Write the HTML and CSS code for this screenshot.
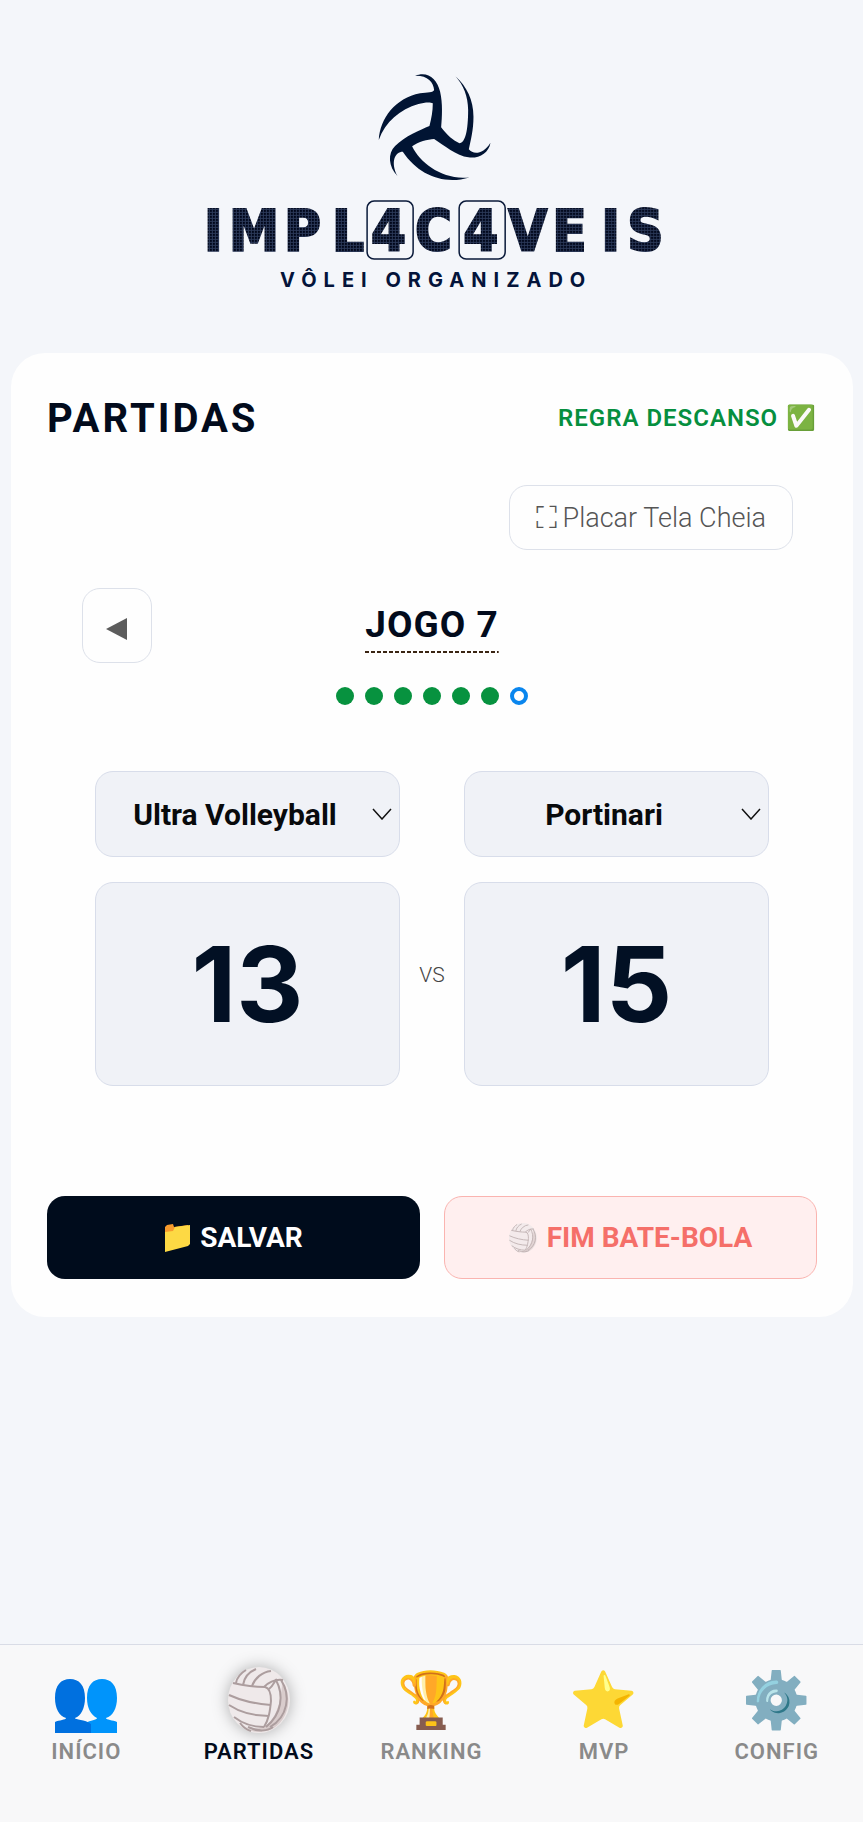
FILE: index.html
```
<!DOCTYPE html>
<html lang="pt-BR">
<head>
  <meta charset="UTF-8">
  <meta name="viewport" content="width=device-width, initial-scale=1.0">
  <title>Implacáveis - Partidas</title>
  <link rel="stylesheet" href="styles.css">
</head>
<body>
  <!-- shared icons -->
  <svg class="sprite" aria-hidden="true">
    <symbol id="ball" viewBox="0 0 62 66">
      <ellipse class="ball-skin" cx="31" cy="33" rx="31" ry="33"/>
      <path class="ball-shade" d="M42 55 C50 45 54 30 54 14 C60 22 62 34 59 43 C55 56 45 65 31 65 C27 65 24 64 21 63 C30 62 38 60 42 55Z"/>
      <g class="ball-seam">
        <path d="M5 16 C18 19 28 20 37 20 C42 21 43 27 43 34 C42 44 41 52 36 60"/>
        <path d="M1 28 C14 34 28 37 43 38"/>
        <path d="M1 38 C13 46 27 49 41 49"/>
        <path d="M6 50 C15 57 25 60 36 60"/>
        <path d="M8 16 C9 10 13 6 18 3"/>
        <path d="M15 18 C16 11 21 5 28 2"/>
        <path d="M24 19 C27 11 34 5 43 4"/>
        <path d="M36 20 C41 15 48 12 55 13"/>
        <path d="M41 22 C45 19 46 15 48 13 C56 28 54 47 38 60"/>
        <path d="M53 13 C63 28 60 50 42 60"/>
        <path d="M12 56 C15 60 19 63 23 64"/>
        <path d="M20 60 C30 65 40 64 45 60"/>
      </g>
    </symbol>
    <symbol id="people" viewBox="0 0 62 54">
      <path fill="#0094fb" d="M47 0 C56 0 62 6 62 19 C62 29 58 37 51 39 C51 41 58 41 62 43 V54 H31 V44 C35 41 42 41 42 39 C36 36 32 29 32 19 C32 6 38 0 47 0Z"/>
      <path fill="#0070df" d="M15 0 C24 0 30 6 30 19 C30 29 26 37 20 39 C20 41 30 40 36 45 V54 H0 V43 C4 41 11 41 11 39 C4 37 0 29 0 19 C0 6 6 0 15 0Z"/>
    </symbol>
  </svg>

  <header class="header">
    <svg class="logo" viewBox="190 60 483 240" role="img" aria-label="Implacáveis Vôlei Organizado">
      <defs>
        <pattern id="dots" x="0" y="0" width="3" height="3" patternUnits="userSpaceOnUse">
          <rect width="3" height="3" fill="#2c3a5a"/>
          <rect width="2" height="2" fill="#00061a"/>
        </pattern>
      </defs>
      <path class="logo-mark" transform="translate(340 50) scale(.3333)" d="M225 77 C262 62 290 85 300 125 C308 160 306 200 303 232 C320 255 340 272 358 280 C376 278 384 240 384 180 C384 140 370 105 346 79 C380 110 400 150 400 200 C400 240 392 270 386 298 C400 315 430 312 451 278 C446 310 415 326 385 322 C350 318 310 285 282 267 C262 268 235 275 216 289 C240 340 310 392 388 382 C310 405 235 375 188 305 C165 305 150 335 172 378 C145 350 142 310 165 288 C195 258 240 240 268 228 C274 205 278 185 278 160 C270 155 250 158 235 162 C180 178 135 215 116 270 C120 205 165 145 240 130 C262 126 280 128 282 120 C280 95 262 76 225 77Z"/>
      <text class="logo-name" y="251" x="204 229 284 332 371 415 463 508 552 601 627">IMPL4C4VEIS</text>
      <rect class="logo-box" x="367" y="201" width="46" height="58" rx="7"/>
      <rect class="logo-box" x="459" y="201" width="46" height="58" rx="7"/>
      <text class="logo-sub" x="280" y="287">VÔLEI ORGANIZADO</text>
    </svg>
  </header>

  <main class="card">
    <div class="card-header">
      <h1>PARTIDAS</h1>
      <span class="regra">REGRA DESCANSO <span class="check">✅</span></span>
    </div>

    <button type="button" class="btn-outline btn-fullscreen"><span class="fs-icon">⛶</span>Placar Tela Cheia</button>

    <div class="jogo-row">
      <button type="button" class="btn-outline btn-prev" aria-label="Jogo anterior">
        <svg width="22" height="22" viewBox="0 0 22 22"><path fill="#5c5c5c" d="M0 11 L21 0 V22Z"/></svg>
      </button>
      <h2>JOGO 7</h2>
    </div>

    <div class="dots">
      <span class="dot"></span>
      <span class="dot"></span>
      <span class="dot"></span>
      <span class="dot"></span>
      <span class="dot"></span>
      <span class="dot"></span>
      <span class="dot atual"></span>
    </div>

    <div class="placar">
      <div class="time">
        <div class="select-wrap">
          <select aria-label="Time A">
            <option>Ultra Volleyball</option>
            <option>Portinari</option>
          </select>
          <svg class="seta" width="20" height="12" viewBox="0 0 20 12"><path d="M1 1 L10 11 L19 1"/></svg>
        </div>
        <input type="text" inputmode="numeric" value="13" aria-label="Pontos do time A">
      </div>
      <span class="vs">VS</span>
      <div class="time">
        <div class="select-wrap">
          <select aria-label="Time B">
            <option>Portinari</option>
            <option>Ultra Volleyball</option>
          </select>
          <svg class="seta" width="20" height="12" viewBox="0 0 20 12"><path d="M1 1 L10 11 L19 1"/></svg>
        </div>
        <input type="text" inputmode="numeric" value="15" aria-label="Pontos do time B">
      </div>
    </div>

    <div class="acoes">
      <button type="button" class="btn-salvar">
        <svg width="26" height="28" viewBox="0 0 26 28">
          <path fill="#f79a2c" d="M1 9 V3 L3 1 L9 0 L10 3 L24 1 V8Z"/>
          <path fill="#fdd944" d="M1 8 L9 7 L11 3 L26 1 V20 L24 22 L1 28Z"/>
        </svg>
        SALVAR
      </button>
      <button type="button" class="btn-fim">
        <svg class="ball-faded" width="28" height="30"><use href="#ball"/></svg>
        FIM BATE-BOLA
      </button>
    </div>
  </main>

  <nav class="menu">
    <a href="#inicio">
      <span class="icone"><svg class="people" width="62" height="54"><use href="#people"/></svg></span>
      INÍCIO
    </a>
    <a href="#partidas" class="ativo">
      <span class="icone"><svg width="62" height="66"><use href="#ball"/></svg></span>
      PARTIDAS
    </a>
    <a href="#ranking"><span class="icone">🏆</span>RANKING</a>
    <a href="#mvp"><span class="icone">⭐</span>MVP</a>
    <a href="#config"><span class="icone">⚙️</span>CONFIG</a>
  </nav>
</body>
</html>
```
FILE: styles.css
```
* {
  box-sizing: border-box;
}
body {
  margin: 0;
  min-height: 100vh;
  display: flex;
  flex-direction: column;
  font-family: Roboto, "Noto Color Emoji", sans-serif;
  background-color: #f4f6fa;
  color: #020b1c;
}
button, select, input {
  font-family: inherit;
  margin: 0;
}
.sprite {
  position: absolute;
  width: 0;
  height: 0;
}

/* header */
.header {
  padding: 60px 0 53px;
}
.logo {
  display: block;
  width: 56%;
  margin: 0 auto;
}
.logo-mark {
  fill: #011433;
}
.logo-name {
  font-family: "DejaVu Sans Condensed", "DejaVu Sans", sans-serif;
  font-size: 56px;
  font-weight: 700;
  fill: url(#dots);
  stroke: url(#dots);
  stroke-width: 2;
}
.logo-box {
  fill: none;
  stroke: #0a1a3a;
  stroke-width: 1.5;
}
.logo-sub {
  font-family: Inter, sans-serif;
  font-size: 20px;
  font-weight: 700;
  letter-spacing: 7px;
  fill: #04143a;
}

/* card */
.card {
  margin: 0 10px 0 11px;
  padding: 40px 36px 38px;
  background-color: #fefefe;
  border-radius: 34px;
}
.card-header {
  display: flex;
  justify-content: space-between;
  align-items: center;
  height: 50px;
}
h1, h2 {
  margin: 0;
  font-weight: 700;
}
h1 {
  font-size: 40px;
  letter-spacing: 3px;
}
.regra {
  display: flex;
  align-items: center;
  gap: 8px;
  font-size: 24px;
  font-weight: 600;
  letter-spacing: 1px;
  color: #068f3f;
}
.check {
  font-size: 24px;
}
.btn-outline {
  display: flex;
  align-items: center;
  justify-content: center;
  background-color: #fefefe;
  border: 1px solid #dde1ea;
  border-radius: 18px;
  color: #555;
}
.btn-fullscreen {
  margin: 42px 24px 38px auto;
  height: 65px;
  padding: 0 26px;
  gap: 6px;
  font-size: 27px;
  font-weight: 300;
}
.fs-icon {
  font-size: 30px;
}
.jogo-row {
  display: grid;
  grid-template-columns: 70px 1fr 70px;
  align-items: center;
  justify-items: center;
  margin: 0 35px;
}
.btn-prev {
  width: 70px;
  height: 75px;
  padding: 6px 0 0;
}
h2 {
  padding-bottom: 1px;
  font-size: 37px;
  line-height: 54px;
  letter-spacing: 1px;
  /* short dashes, 4px on and 2px off */
  background: repeating-linear-gradient(to right, #3a2412 0 4px, transparent 4px 6px) bottom / 100% 2px no-repeat;
}
.dots {
  display: flex;
  justify-content: center;
  gap: 11px;
  margin: 24px 0 66px;
}
.dot {
  width: 18px;
  height: 18px;
  border-radius: 50%;
  background-color: #07923f;
}
.dot.atual {
  background-color: #fff;
  border: 4px solid #0a86ee;
}

/* placar */
.placar {
  display: grid;
  grid-template-columns: 1fr 64px 1fr;
  margin: 0 48px 110px;
}
.time {
  display: flex;
  flex-direction: column;
  gap: 25px;
  min-width: 0;
}
.select-wrap {
  position: relative;
}
.select-wrap select,
.time input {
  width: 100%;
  background-color: #f0f2f7;
  border: 1px solid #d8ddea;
  border-radius: 18px;
  text-align: center;
}
.select-wrap select {
  display: block;
  appearance: none;
  height: 86px;
  padding: 0 25px 0 0;
  font-size: 30px;
  font-weight: 700;
  text-align-last: center;
  color: #080a0c;
}
.seta {
  position: absolute;
  right: 8px;
  top: 37px;
  fill: none;
  stroke: #111;
  stroke-width: 1.5;
  pointer-events: none;
}
.time input {
  height: 204px;
  padding: 0;
  font-family: Inter, sans-serif;
  font-size: 104px;
  font-weight: 700;
  color: #021024;
}
.vs {
  margin-top: 92px;
  align-self: center;
  text-align: center;
  font-size: 21px;
  font-weight: 300;
  color: #444;
}

/* botoes */
.acoes {
  display: grid;
  grid-template-columns: 1fr 1fr;
  gap: 24px;
}
.acoes button {
  display: flex;
  align-items: center;
  justify-content: center;
  gap: 10px;
  height: 83px;
  border: none;
  border-radius: 18px;
  font-size: 28px;
  font-weight: 700;
}
.acoes .btn-salvar {
  background-color: #000c1c;
  color: #fff;
}
.acoes .btn-fim {
  background-color: #ffefef;
  border: 1px solid #fab4b0;
  color: #f56f69;
}

.ball-skin {
  fill: #efe9ea;
}
.ball-shade {
  fill: #d9cccc;
}
.ball-seam {
  fill: none;
  stroke: #ac9d9e;
  stroke-width: 2;
}
.ball-faded {
  opacity: .75;
}

/* menu */
.menu {
  display: grid;
  grid-template-columns: repeat(5, 1fr);
  height: 178px;
  margin-top: auto;
  padding-top: 22px;
  background-color: #f8f8f9;
  border-top: 1px solid #d9dce6;
}
.menu a {
  display: flex;
  flex-direction: column;
  align-items: center;
  gap: 6px;
  font-size: 22px;
  font-weight: 600;
  letter-spacing: 1px;
  line-height: 26px;
  text-decoration: none;
  color: #8a8a8a;
}
.menu .ativo {
  color: #020b1c;
}
.icone {
  display: flex;
  align-items: center;
  justify-content: center;
  height: 66px;
  font-size: 55px;
  line-height: 66px;
  letter-spacing: 0;
}
.icone .people {
  align-self: flex-end;
}
.ativo .icone svg {
  filter: drop-shadow(0 0 8px rgba(0, 0, 0, .3));
}
```
